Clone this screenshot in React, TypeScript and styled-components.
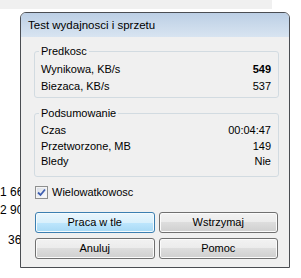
import React from "react";
import styled, { createGlobalStyle } from "styled-components";

const GlobalStyle = createGlobalStyle`
  html, body {
    margin: 0;
    padding: 0;
    background: #ffffff;
  }
  body {
    font-family: "Liberation Sans", Arial, sans-serif;
    font-size: 11px;
    color: #000;
  }
`;

const Desktop = styled.div`
  position: relative;
  width: 301px;
  height: 278px;
  overflow: hidden;
  background: #ffffff;
`;

const TopStrip = styled.div`
  width: 272px;
  height: 9px;
  background: #f0f0f0;
`;

const NumberColumn = styled.div`
  display: flex;
  flex-direction: column;
  width: 28px;
  padding-top: 176px;
  text-align: right;
  font-size: 12px;
  line-height: 14px;
`;

const NumberRow = styled.div<{ $gap: number }>`
  margin-top: ${(p) => p.$gap}px;
  white-space: nowrap;
`;

const Window = styled.div`
  position: absolute;
  left: 20px;
  top: 12px;
  width: 270px;
  height: 256px;
  box-sizing: border-box;
  display: flex;
  flex-direction: column;
  border: 1px solid #4a4d52;
  border-radius: 6px 6px 0 0;
  background: #f0f0f0;
  overflow: hidden;
`;

const TitleBar = styled.div`
  display: flex;
  align-items: center;
  height: 24px;
  padding-left: 7px;
  background: linear-gradient(#bccfe5, #d8e4f1);
  font-size: 11.5px;
  color: #000;
`;

const Client = styled.div`
  flex: 1;
  display: flex;
  flex-direction: column;
  padding: 0 10px 0 13px;
`;

const Group = styled.fieldset<{ $top: number; $padTop: number; $padBottom: number }>`
  margin: ${(p) => p.$top}px 0 0 0;
  padding: ${(p) => p.$padTop}px 7px ${(p) => p.$padBottom}px 4px;
  border: 1px solid #d2dbe1;
  border-radius: 3px;
  min-width: 0;
`;

const Legend = styled.legend`
  padding: 0 2px;
  line-height: 14px;
`;

const Row = styled.div<{ $height: number }>`
  display: flex;
  justify-content: space-between;
  padding-left: 2px;
  line-height: ${(p) => p.$height}px;
`;

const Value = styled.span<{ $bold?: boolean }>`
  font-weight: ${(p) => (p.$bold ? 700 : 400)};
`;

const CheckRow = styled.label`
  display: flex;
  align-items: center;
  gap: 4px;
  margin: 9px 0 0 1px;
  line-height: 13px;
`;

const CheckBox = styled.span`
  display: flex;
  align-items: center;
  justify-content: center;
  width: 13px;
  height: 13px;
  box-sizing: border-box;
  border: 1px solid #8e8f8f;
  background: linear-gradient(135deg, #d6dbe4, #ffffff);
  box-shadow: inset 0 0 0 1px #f4f4f4;
`;

const ButtonGrid = styled.div`
  display: grid;
  grid-template-columns: 1fr 1fr;
  grid-auto-rows: 21px;
  gap: 5px 4px;
  margin: 13px 1px 0 1px;
`;

const Button = styled.button<{ $default?: boolean }>`
  box-sizing: border-box;
  margin: 0;
  padding: 0;
  border: 1px solid ${(p) => (p.$default ? "#3c7fb1" : "#707070")};
  border-radius: 3px;
  background: ${(p) =>
    p.$default
      ? "linear-gradient(#eaf6fd 0%, #d9f0fc 50%, #bee6fd 50%, #a7d9f5 100%)"
      : "linear-gradient(#f2f2f2 0%, #ebebeb 50%, #dddddd 50%, #cfcfcf 100%)"};
  box-shadow: inset 0 0 0 1px ${(p) => (p.$default ? "#f4fbfe" : "#fbfbfb")};
  font-family: "Liberation Sans", Arial, sans-serif;
  font-size: 11px;
  color: #000;
  cursor: pointer;
`;

const App = () => {
  return (
    <Desktop>
      <GlobalStyle />
      <TopStrip />
      <NumberColumn>
        <NumberRow $gap={0}>1 660</NumberRow>
        <NumberRow $gap={4}>2 905</NumberRow>
        <NumberRow $gap={0}>.</NumberRow>
        <NumberRow $gap={2}>364</NumberRow>
      </NumberColumn>
      <Window>
        <TitleBar>Test wydajnosci i sprzetu</TitleBar>
        <Client>
          <Group $top={7} $padTop={3} $padBottom={2}>
            <Legend>Predkosc</Legend>
            <Row $height={17}>
              <span>Wynikowa, KB/s</span>
              <Value $bold>549</Value>
            </Row>
            <Row $height={17}>
              <span>Biezaca, KB/s</span>
              <Value>537</Value>
            </Row>
          </Group>
          <Group $top={8} $padTop={3} $padBottom={6}>
            <Legend>Podsumowanie</Legend>
            <Row $height={15.5}>
              <span>Czas</span>
              <Value>00:04:47</Value>
            </Row>
            <Row $height={15.5}>
              <span>Przetworzone, MB</span>
              <Value>149</Value>
            </Row>
            <Row $height={15.5}>
              <span>Bledy</span>
              <Value>Nie</Value>
            </Row>
          </Group>
          <CheckRow>
            <CheckBox>
              <svg width="9" height="9" viewBox="0 0 9 9">
                <path d="M1 4.5 L3.5 7 L8 1.5" fill="none" stroke="#3f5fb0" strokeWidth="1.8" />
              </svg>
            </CheckBox>
            Wielowatkowosc
          </CheckRow>
          <ButtonGrid>
            <Button $default>Praca w tle</Button>
            <Button>Wstrzymaj</Button>
            <Button>Anuluj</Button>
            <Button>Pomoc</Button>
          </ButtonGrid>
        </Client>
      </Window>
    </Desktop>
  );
};

export default App;
